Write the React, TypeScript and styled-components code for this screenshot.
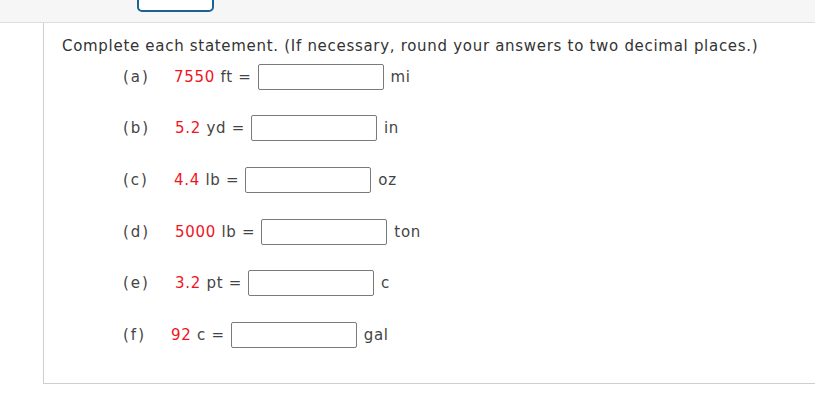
import React from "react"
import styled, { createGlobalStyle } from "styled-components"

const GlobalStyle = createGlobalStyle`
  body {
    margin: 0;
    background: #fff;
    font-family: "DejaVu Sans", Verdana, sans-serif;
    color: #333;
  }
`

const TopBar = styled.div`
  display: flex;
  align-items: flex-start;
  height: 22px;
  background: #f6f6f6;
  border-bottom: 1px solid #dedede;
  padding-left: 137px;
`

const TabButton = styled.div`
  width: 73px;
  height: 14px;
  margin-top: -6px;
  border: 2px solid #1b6394;
  border-radius: 0 0 5px 5px;
  background: #fff;
`

const Panel = styled.div`
  margin-left: 43px;
  height: 361px;
  border-left: 1px solid #cfcfcf;
  border-bottom: 1px solid #cfcfcf;
  padding: 13px 0 0 18px;
  box-sizing: border-box;
  letter-spacing: 0.7px;
`

const Intro = styled.p`
  margin: 0;
  font-size: 15px;
  line-height: 20px;
  color: #333;
`

const Rows = styled.div`
  display: flex;
  flex-direction: column;
  margin-top: -5px;
`

const Row = styled.div`
  display: flex;
  align-items: center;
  height: 51.6px;
  padding-left: 61px;
  font-size: 15px;
`

const Label = styled.span`
  width: 51px;
  color: #444;
  letter-spacing: 2px;
`

const Value = styled.span<{ $shift: number }>`
  margin-left: ${(p) => p.$shift}px;
  white-space: pre;
  color: #444;
`

const Num = styled.span`
  color: #f0141e;
`

const Answer = styled.input`
  width: 126px;
  height: 26px;
  box-sizing: border-box;
  margin: 0 7px 0 6px;
  border: 1px solid #7a7a7a;
  border-radius: 2px;
  background: #fff;
`

const Unit = styled.span`
  color: #444;
`

const items = [
  { label: "(a)", num: "7550", from: "ft", unit: "mi", shift: 0 },
  { label: "(b)", num: "5.2", from: "yd", unit: "in", shift: 1 },
  { label: "(c)", num: "4.4", from: "lb", unit: "oz", shift: 0 },
  { label: "(d)", num: "5000", from: "lb", unit: "ton", shift: 1 },
  { label: "(e)", num: "3.2", from: "pt", unit: "c", shift: 1 },
  { label: "(f)", num: "92", from: "c", unit: "gal", shift: -3 },
]

export default function App() {
  return (
    <>
      <GlobalStyle />
      <TopBar>
        <TabButton />
      </TopBar>
      <Panel>
        <Intro>Complete each statement. (If necessary, round your answers to two decimal places.)</Intro>
        <Rows>
          {items.map((it) => (
            <Row key={it.label}>
              <Label>{it.label}</Label>
              <Value $shift={it.shift}>
                <Num>{it.num}</Num> {it.from} =
              </Value>
              <Answer type="text" />
              <Unit>{it.unit}</Unit>
            </Row>
          ))}
        </Rows>
      </Panel>
    </>
  )
}
